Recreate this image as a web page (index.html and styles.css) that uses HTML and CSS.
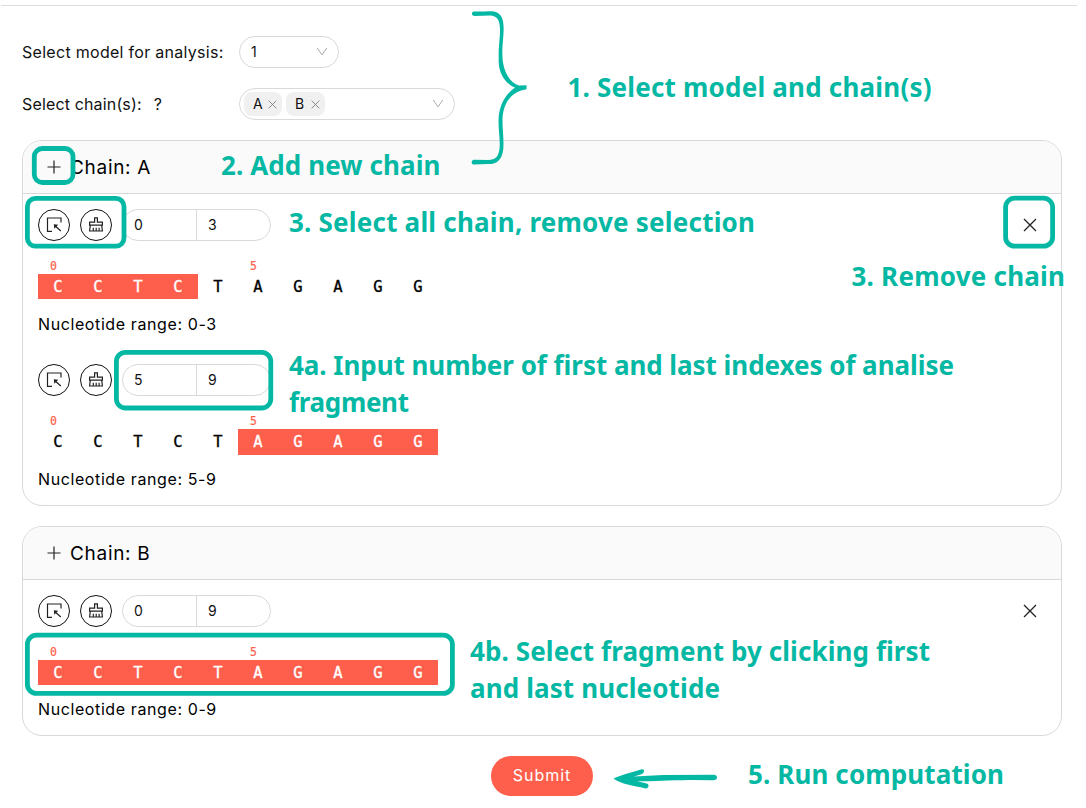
FILE: index.html
```html
<!DOCTYPE html>
<html lang="en">
<head>
<meta charset="utf-8">
<title>Chain selection</title>
<link rel="stylesheet" href="styles.css">
</head>
<body>
<svg class="defs" width="0" height="0">
  <symbol id="select" viewBox="0 0 16 16"><path d="M6 14.3H1.5V1H15V5.500M8.4 8.2L14.8 14" fill="none" stroke="currentColor" stroke-width="1.2"/><path d="M7.800 7.300L12.200 7.800L8.300 11.800Z" fill="currentColor"/></symbol>
  <symbol id="clear" viewBox="0 0 16 16"><path d="M6.6 5.2V.9H9.4V5.2H14.4V8.2H1.6V5.2ZM2.3 8.2L1.6 14H14.4L13.7 8.2M5.3 13.800V10.8M8.2 13.800V10.8M11.1 13.800V10.8" fill="none" stroke="currentColor" stroke-width="1.2"/></symbol>
  <symbol id="plus" viewBox="0 0 14 14"><path d="M7 .5V13.5M.5 7H13.5" stroke="currentColor" stroke-width="1.2"/></symbol>
  <symbol id="cross" viewBox="0 0 14 14"><path d="M1 1L13 13M13 1L1 13" stroke="currentColor" stroke-width="1.3"/></symbol>
  <symbol id="down" viewBox="0 0 12 10"><path d="M1.2 1L6 7.8L10.8 1" fill="none" stroke="currentColor" stroke-width="1"/></symbol>
</svg>
<main class="page">
  <div class="form">
    <div class="field"><span class="label label-model">Select model for analysis:</span>
      <div class="select small"><span>1</span><svg class="down"><use href="#down"/></svg></div></div>
    <div class="field"><span class="label"><span class="label-chain">Select chain(s):</span><span class="help">?</span></span>
      <div class="select wide"><span class="tags"><span class="tag">A<svg><use href="#cross"/></svg></span><span class="tag tag-b">B<svg><use href="#cross"/></svg></span></span><svg class="down"><use href="#down"/></svg></div></div>
  </div>

  <section class="card">
    <header><svg class="plus"><use href="#plus"/></svg><h2>Chain: A</h2></header>
    <div class="body">
      <div class="fragment">
        <div class="controls"><button class="round"><svg><use href="#select"/></svg></button><button class="round"><svg><use href="#clear"/></svg></button><div class="range"><span>0</span><span>3</span></div><svg class="remove"><use href="#cross"/></svg></div>
        <div class="ticks"><span>0</span><span>5</span></div>
        <div class="sequence"><b class="on">C</b><b class="on">C</b><b class="on">T</b><b class="on">C</b><b>T</b><b>A</b><b>G</b><b>A</b><b>G</b><b>G</b></div>
        <p>Nucleotide range: 0-3</p>
      </div>
      <div class="fragment second">
        <div class="controls"><button class="round"><svg><use href="#select"/></svg></button><button class="round"><svg><use href="#clear"/></svg></button><div class="range"><span>5</span><span>9</span></div></div>
        <div class="ticks"><span>0</span><span>5</span></div>
        <div class="sequence"><b>C</b><b>C</b><b>T</b><b>C</b><b>T</b><b class="on">A</b><b class="on">G</b><b class="on">A</b><b class="on">G</b><b class="on">G</b></div>
        <p>Nucleotide range: 5-9</p>
      </div>
    </div>
  </section>

  <section class="card card-b">
    <header><svg class="plus"><use href="#plus"/></svg><h2>Chain: B</h2></header>
    <div class="body">
      <div class="fragment">
        <div class="controls"><button class="round"><svg><use href="#select"/></svg></button><button class="round"><svg><use href="#clear"/></svg></button><div class="range"><span>0</span><span>9</span></div><svg class="remove"><use href="#cross"/></svg></div>
        <div class="ticks"><span>0</span><span>5</span></div>
        <div class="sequence"><b class="on">C</b><b class="on">C</b><b class="on">T</b><b class="on">C</b><b class="on">T</b><b class="on">A</b><b class="on">G</b><b class="on">A</b><b class="on">G</b><b class="on">G</b></div>
        <p>Nucleotide range: 0-9</p>
      </div>
    </div>
  </section>
  <button class="submit">Submit</button>
</main>

<svg class="notes" width="1086" height="808" viewBox="0 0 1086 808">
  <g class="frames">
    <rect x="34.3" y="148.5" width="38.7" height="34" rx="8"/>
    <rect x="27.4" y="198.4" width="96.6" height="47.8" rx="8"/>
    <rect x="1005.6" y="198.2" width="47" height="48" rx="9"/>
    <rect x="116.4" y="352.3" width="154.4" height="55.7" rx="9"/>
    <rect x="27.4" y="635.2" width="425" height="58.2" rx="9"/>
  </g>
  <path d="M474 11.4C483 12 489 10.8 494 11.5C502 13 504 20 503.600 31C503 44 502 47 502.500 58C503.500 72 510 83 519 85.400L526.500 85.200V89.300L521 90.600C508 95 503 107 502.500 119C502.400 130 504 138 503.300 149C502 160 497 164.300 488 164.100L473.500 164.500C471 164.500 471 160.300 474 159.800L488 160C496 160 499 156 499.700 147C500 135 498 129 498.700 117C500 103 506 94 515 87.600C504 83 498 71 498.700 59C498.400 46 500 39 500 30C500 20 497 15.700 490 15.600L475 15.900C471 16 471 12 474 11.4Z"/>
  <path d="M613.500 778.600C623 774 632 772.500 641 769.500C645 768.500 645 773 641.500 774.300L634 776.500L663 775L714 774.800C718 775 718 780 714 780.200L690 779.900C668 780.200 655 781.200 637 781.300L646 783.300C650 784 649 788.700 645.500 788.400C633 785.500 621 784.500 613.500 778.600Z"/>
  <g class="captions">
    <text x="567.500" y="97" textLength="364">1. Select model and chain(s)</text>
    <text x="221" y="175" textLength="219.500">2. Add new chain</text>
    <text x="289" y="232" textLength="466">3. Select all chain, remove selection</text>
    <text x="851.500" y="286" textLength="213.500">3. Remove chain</text>
    <text x="289" y="375" textLength="665">4a. Input number of first and last indexes of analise</text>
    <text x="289" y="412" textLength="120">fragment</text>
    <text x="470" y="661" textLength="460">4b. Select fragment by clicking first</text>
    <text x="470" y="698" textLength="250">and last nucleotide</text>
    <text x="748" y="784" textLength="256">5. Run computation</text>
  </g>
</svg>
</body>
</html>
```
FILE: styles.css
```css
* { box-sizing: border-box; }
body { margin: 0; width: 1086px; height: 808px; overflow: hidden; position: relative; background: #fff; color: #111; font: 16px/26px Inter, sans-serif; }
.defs { display: none; }
.page { margin: 5px 9px 0 1px; border-top: 1px solid #ddd; padding: 30px 15px 0 21px; display: flex; flex-direction: column; }
.form { display: flex; flex-direction: column; gap: 20px; margin-bottom: 20px; }
.field { display: flex; align-items: center; height: 32px; }
.label { width: 217px; white-space: nowrap; }
.label-model { letter-spacing: .29px; }
.label-chain { letter-spacing: .15px; }
.help { margin-left: 12px; }
.select { height: 32px; border: 1px solid #d9d9d9; border-radius: 16px; display: flex; align-items: center; justify-content: space-between; padding: 0 10px 0 11px; font-size: 14px; }
.small { width: 100px; }
.wide { width: 216px; padding-left: 4px; }
.down { width: 12px; height: 10px; color: #aaa; }
.tags { display: flex; gap: 4px; }
.tag { display: flex; align-items: center; justify-content: space-between; width: 38px; height: 24px; padding: 0 5px 0 9px; border-radius: 8px; background: #f0f0f0; }
.tag-b { width: 39px; }
.tag svg { width: 9px; height: 9px; color: #777; }
.card { width: 1040px; border: 1px solid #d9d9d9; border-radius: 20px; margin-bottom: 20px; overflow: hidden; }
.card header { height: 53px; display: flex; align-items: center; padding-left: 24px; gap: 9px; background: #fafafa; border-bottom: 1px solid #d9d9d9; }
.plus { width: 14px; height: 14px; color: #222; }
h2 { margin: 0; padding-top: 1px; font-size: 19px; font-weight: 400; letter-spacing: .7px; color: #000; }
.body { padding: 15px 15px 13px; display: flex; flex-direction: column; gap: 27px; }
.fragment { display: flex; flex-direction: column; }
.controls { display: flex; align-items: center; height: 32px; gap: 10px; }
.round { width: 32px; height: 32px; border: 1px solid #111; border-radius: 50%; background: #fff; display: flex; align-items: center; justify-content: center; padding: 0; color: #222; }
.round svg { width: 16px; height: 16px; }
.range { display: flex; width: 149px; height: 32px; border: 1px solid #d9d9d9; border-radius: 16px; font-size: 14px; line-height: 30px; }
.range span { width: 73px; padding-left: 11px; }
.range span + span { border-left: 1px solid #d9d9d9; padding-left: 11px; }
.remove { width: 14px; height: 14px; margin-left: auto; margin-right: 9px; color: #222; }
.ticks { display: grid; grid-template-columns: 200px 200px; height: 33px; padding: 17px 0 0 12px; font: 11.500px/16px "DejaVu Sans Mono", monospace; color: #fe5f4c; -webkit-text-stroke: .2px; }
.sequence { display: flex; height: 25px; }
.sequence b { width: 40px; text-align: center; font: 15.500px/27px "DejaVu Sans Mono", monospace; color: #000; -webkit-text-stroke: .35px; }
.sequence .on { background: #fe5f4c; color: #fff; }
.second .sequence { height: 26px; }
p { margin: 12px 0 0; height: 26px; letter-spacing: .6px; color: #000; }
.second p { margin-top: 11px; }
.card-b p { margin-top: 11px; }
.submit { width: 102px; height: 40px; align-self: center; border: 0; padding: 0 0 2px; border-radius: 20px; background: #fe5f4c; color: #fff; font: 16px Inter, sans-serif; letter-spacing: 1px; }
.notes { position: absolute; left: 0; top: 0; fill: #05b8a3; }
.frames rect { fill: none; stroke: #05b8a3; stroke-width: 4.800px; }
.captions { font: 700 26px "Noto Sans", sans-serif; }
```
